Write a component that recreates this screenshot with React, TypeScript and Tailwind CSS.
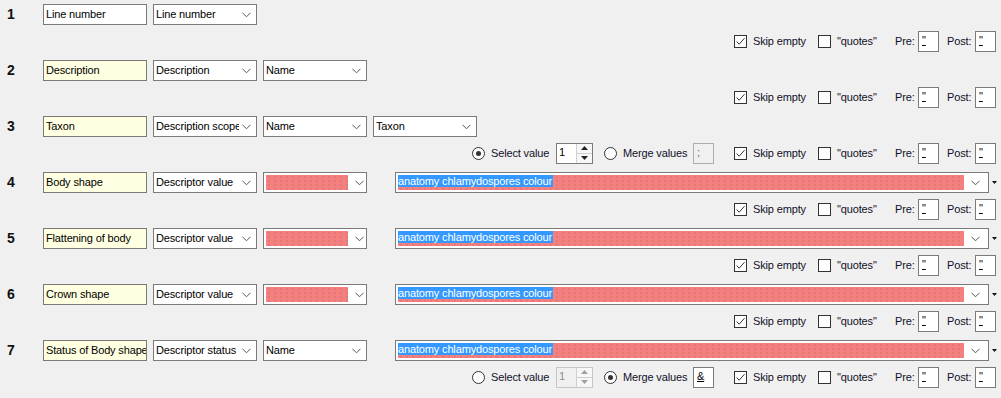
import React from "react";

const FONT = { fontFamily: '"Liberation Sans", Arial, sans-serif', letterSpacing: "-0.15px" } as React.CSSProperties;

function Chevron() {
  return (
    <svg width="9" height="6" viewBox="0 0 9 6" className="shrink-0">
      <path d="M0.5 0.8 L4.5 4.8 L8.5 0.8" fill="none" stroke="#555" strokeWidth="1" />
    </svg>
  );
}

function TextBox({ text, yellow }: { text: string; yellow?: boolean }) {
  return (
    <div
      className={`w-[104px] h-[21px] border border-[#7a7a7a] ${yellow ? "bg-[#ffffe1]" : "bg-white"} flex items-center pl-[2px] overflow-hidden whitespace-nowrap text-[11px] text-black`}
    >
      {text}
    </div>
  );
}

const RED =
  "bg-[#f47f7f] bg-[radial-gradient(circle,#c86a6a_0.55px,transparent_0.8px)] bg-[length:6px_4px]";

function Combo({ text, red }: { text?: string; red?: boolean }) {
  return (
    <div className="w-[104px] h-[21px] border border-[#7a7a7a] bg-white flex items-center overflow-hidden">
      {red ? (
        <div className={`ml-[2px] w-[82px] h-[15px] ${RED}`} />
      ) : (
        <div className="flex-1 pl-[2px] mr-[3px] overflow-hidden whitespace-nowrap text-[11px] text-black">{text}</div>
      )}
      <div className={`${red ? "ml-[7px]" : "mr-[5px]"} flex items-center`}>
        <Chevron />
      </div>
    </div>
  );
}

function BigCombo() {
  return (
    <div className="ml-[28px] flex items-center">
      <div className="w-[594px] h-[21px] border border-[#7a7a7a] bg-white flex items-center">
        <div className={`ml-[2px] w-[566px] h-[15px] ${RED} flex items-start`}>
          <div className="h-[12px] bg-[#3399ff] text-white text-[11px] leading-[12px] whitespace-nowrap pr-[1px]">
            anatomy chlamydospores colour
          </div>
        </div>
        <div className="ml-[7px] flex items-center">
          <Chevron />
        </div>
      </div>
      <svg width="5" height="3" viewBox="0 0 5 3" className="ml-[3px]">
        <path d="M0 0 H5 L2.5 3 Z" fill="#111" />
      </svg>
    </div>
  );
}

function Check({ checked }: { checked?: boolean }) {
  return (
    <div className="w-[13px] h-[13px] border border-[#333] bg-white flex items-center justify-center shrink-0">
      {checked && (
        <svg width="11" height="11" viewBox="0 0 11 11">
          <path d="M1.5 5.5 L4.2 8.2 L9.5 2.2" fill="none" stroke="#333" strokeWidth="1" />
        </svg>
      )}
    </div>
  );
}

function Radio({ checked }: { checked?: boolean }) {
  return (
    <div className="w-[13px] h-[13px] rounded-full border border-[#333] bg-white flex items-center justify-center shrink-0">
      {checked && <div className="w-[5px] h-[5px] rounded-full bg-[#333]" />}
    </div>
  );
}

function SmallBox({ ch, disabled }: { ch: string; disabled?: boolean }) {
  return (
    <div
      className={`w-[21px] h-[21px] shrink-0 border ${disabled ? "border-[#adadad] bg-[#f0f0f0] text-[#6d6d6d] decoration-[#6d6d6d]" : "border-[#7a7a7a] bg-white text-black decoration-black"} pl-[3px] text-[11px] leading-[16px] underline`}
    >
      {ch}
    </div>
  );
}

function Numeric({ disabled }: { disabled?: boolean }) {
  const c = disabled ? "#a0a0a0" : "#222";
  return (
    <div
      className={`w-[37px] h-[21px] shrink-0 border ${disabled ? "border-[#c6c6c6] text-[#8a8a8a]" : "border-[#7a7a7a] text-black"} bg-[#f7f7f7] flex`}
    >
      <div className={`flex-1 ${disabled ? "bg-[#f0f0f0]" : "bg-white"} pl-[2px] text-[11px] leading-[17px]`}>1</div>
      <div className="w-[16px] flex flex-col border-l border-[#d0d0d0]">
        <div className="flex-1 flex items-center justify-center border-b border-[#d0d0d0]">
          <svg width="7" height="4" viewBox="0 0 7 4">
            <path d="M0 4 L3.5 0 L7 4 Z" fill={c} />
          </svg>
        </div>
        <div className="flex-1 flex items-center justify-center">
          <svg width="7" height="4" viewBox="0 0 7 4">
            <path d="M0 0 L3.5 4 L7 0 Z" fill={c} />
          </svg>
        </div>
      </div>
    </div>
  );
}

function Line2({ mode }: { mode?: "select" | "merge" }) {
  return (
    <div className="mt-[5px] h-[22px] flex items-center justify-end pr-[5px] text-[11px] text-[#101028]">
      {mode && (
        <>
          <Radio checked={mode === "select"} />
          <span className="ml-[6px] w-[65px] shrink-0 whitespace-nowrap">Select value</span>
          <Numeric disabled={mode === "merge"} />
          <div className="ml-[11px]">
            <Radio checked={mode === "merge"} />
          </div>
          <span className="ml-[6px] w-[70px] shrink-0 whitespace-nowrap">Merge values</span>
          <SmallBox ch={mode === "merge" ? "&" : ";"} disabled={mode === "select"} />
          <div className="w-[20px] shrink-0" />
        </>
      )}
      <Check checked />
      <span className="ml-[6px] w-[65px] shrink-0 whitespace-nowrap">Skip empty</span>
      <Check />
      <span className="ml-[6px] w-[58px] shrink-0 whitespace-nowrap">"quotes"</span>
      <span className="w-[23px] shrink-0 whitespace-nowrap">Pre:</span>
      <SmallBox ch={'"'} />
      <span className="ml-[8px] w-[28px] shrink-0 whitespace-nowrap">Post:</span>
      <SmallBox ch={'"'} />
    </div>
  );
}

type Row = {
  n: string;
  label: string;
  yellow: boolean;
  combos: { text?: string; red?: boolean }[];
  big?: boolean;
  mode?: "select" | "merge";
};

const rows: Row[] = [
  { n: "1", label: "Line number", yellow: false, combos: [{ text: "Line number" }] },
  { n: "2", label: "Description", yellow: true, combos: [{ text: "Description" }, { text: "Name" }] },
  {
    n: "3",
    label: "Taxon",
    yellow: true,
    combos: [{ text: "Description scope" }, { text: "Name" }, { text: "Taxon" }],
    mode: "select",
  },
  { n: "4", label: "Body shape", yellow: true, combos: [{ text: "Descriptor value" }, { red: true }], big: true },
  { n: "5", label: "Flattening of body", yellow: true, combos: [{ text: "Descriptor value" }, { red: true }], big: true },
  { n: "6", label: "Crown shape", yellow: true, combos: [{ text: "Descriptor value" }, { red: true }], big: true },
  {
    n: "7",
    label: "Status of Body shape",
    yellow: true,
    combos: [{ text: "Descriptor status" }, { text: "Name" }],
    big: true,
    mode: "merge",
  },
];

export default function App() {
  return (
    <div className="w-[1001px] h-[398px] bg-[#f0f0f0] overflow-hidden" style={FONT}>
      {rows.map((r) => (
        <div key={r.n} className="h-[56px] flex flex-col">
          <div className="pt-[4px] flex items-center">
            <div className="w-[43px] pl-[7px] text-[14px] font-bold text-[#111]">{r.n}</div>
            <TextBox text={r.label} yellow={r.yellow} />
            {r.combos.map((c, i) => (
              <div key={i} className="ml-[6px]">
                <Combo text={c.text} red={c.red} />
              </div>
            ))}
            {r.big && <BigCombo />}
          </div>
          <Line2 mode={r.mode} />
        </div>
      ))}
    </div>
  );
}
